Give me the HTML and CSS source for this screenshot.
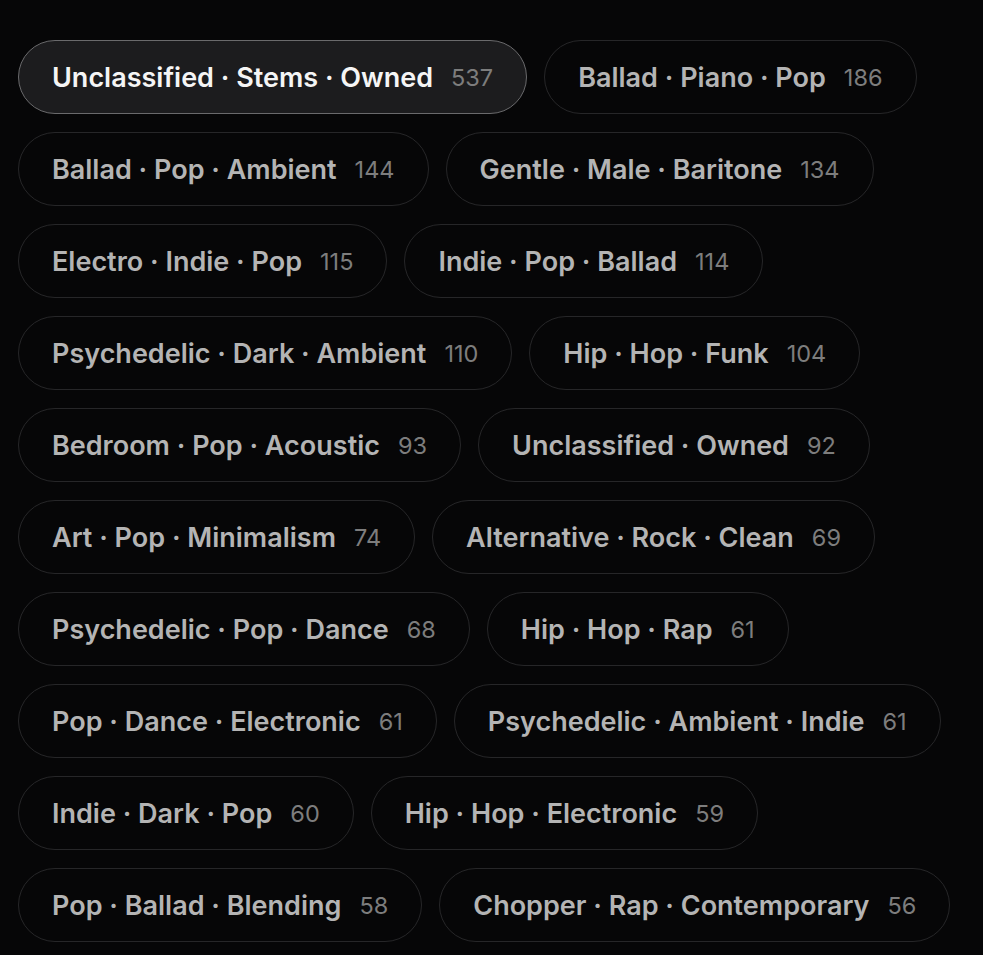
FILE: index.html
```html
<!DOCTYPE html>
<html lang="en">
<head>
<meta charset="utf-8">
<title>Tags</title>
<link rel="stylesheet" href="styles.css">
</head>
<body>
<div class="tags">
  <button class="tag active"><span class="label">Unclassified · Stems · Owned</span><span class="count">537</span></button>
  <button class="tag"><span class="label">Ballad · Piano · Pop</span><span class="count">186</span></button>
  <button class="tag"><span class="label">Ballad · Pop · Ambient</span><span class="count">144</span></button>
  <button class="tag"><span class="label">Gentle · Male · Baritone</span><span class="count">134</span></button>
  <button class="tag"><span class="label">Electro · Indie · Pop</span><span class="count">115</span></button>
  <button class="tag"><span class="label">Indie · Pop · Ballad</span><span class="count">114</span></button>
  <button class="tag"><span class="label">Psychedelic · Dark · Ambient</span><span class="count">110</span></button>
  <button class="tag"><span class="label">Hip · Hop · Funk</span><span class="count">104</span></button>
  <button class="tag"><span class="label">Bedroom · Pop · Acoustic</span><span class="count">93</span></button>
  <button class="tag"><span class="label">Unclassified · Owned</span><span class="count">92</span></button>
  <button class="tag"><span class="label">Art · Pop · Minimalism</span><span class="count">74</span></button>
  <button class="tag"><span class="label">Alternative · Rock · Clean</span><span class="count">69</span></button>
  <button class="tag"><span class="label">Psychedelic · Pop · Dance</span><span class="count">68</span></button>
  <button class="tag"><span class="label">Hip · Hop · Rap</span><span class="count">61</span></button>
  <button class="tag"><span class="label">Pop · Dance · Electronic</span><span class="count">61</span></button>
  <button class="tag"><span class="label">Psychedelic · Ambient · Indie</span><span class="count">61</span></button>
  <button class="tag"><span class="label">Indie · Dark · Pop</span><span class="count">60</span></button>
  <button class="tag"><span class="label">Hip · Hop · Electronic</span><span class="count">59</span></button>
  <button class="tag"><span class="label">Pop · Ballad · Blending</span><span class="count">58</span></button>
  <button class="tag"><span class="label">Chopper · Rap · Contemporary</span><span class="count">56</span></button>
</div>
</body>
</html>
```
FILE: styles.css
```css
html, body {
  margin: 0;
  background: #060607;
}
body {
  font-family: Inter, "Noto Sans", sans-serif;
  height: 955px;
  overflow: hidden;
}
.tags {
  display: flex;
  flex-wrap: wrap;
  gap: 18px 17px;
  padding: 40px 18px 0 18px;
}
.tag {
  display: flex;
  align-items: center;
  gap: 18px;
  height: 74px;
  box-sizing: border-box;
  padding: 0 33px;
  border: 1.5px solid #262628;
  border-radius: 999px;
  background: transparent;
  font-family: inherit;
  cursor: pointer;
}
.tag.active {
  background: #1c1c1e;
  border-color: #6a6a6c;
}
.label {
  font-size: 27px;
  font-weight: 600;
  color: #b4b4b4;
}
.active .label {
  color: #f5f5f5;
}
.count {
  font-size: 23.5px;
  font-weight: 400;
  color: #7d7d7d;
}
```
